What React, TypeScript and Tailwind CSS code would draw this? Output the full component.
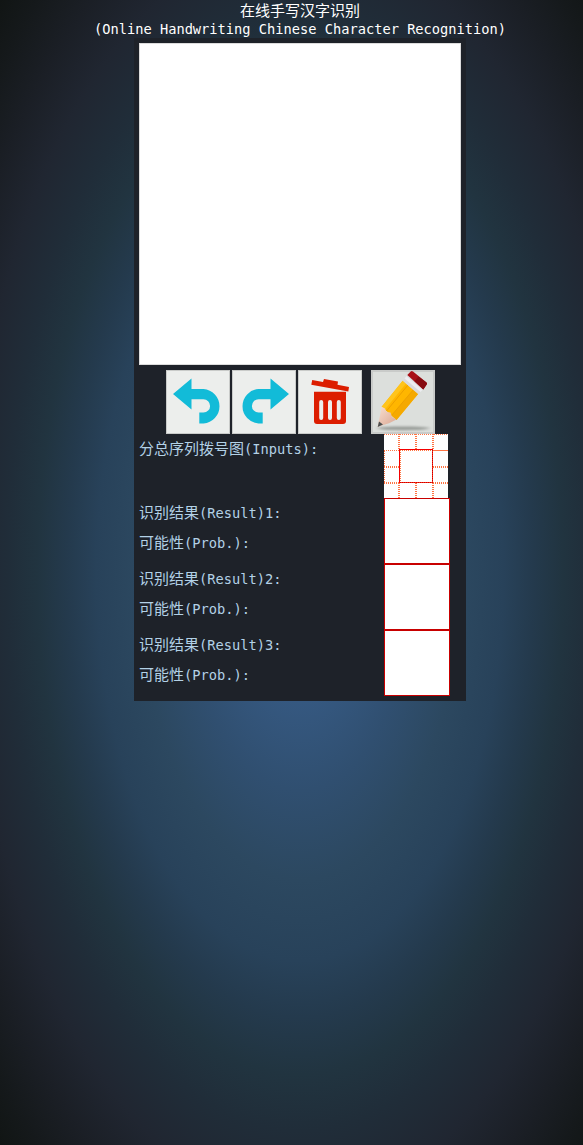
import React from "react";

const MONO = "font-['DejaVu_Sans_Mono',monospace] text-[13.7px]";

function Label({ zh, en }: { zh: string; en: string }) {
  return (
    <div className="flex h-[30px] items-baseline whitespace-nowrap leading-[28px]">
      <span className="font-['Noto_Sans_CJK_SC',sans-serif] text-[15px]">{zh}</span>
      <span className={MONO}>{en}</span>
    </div>
  );
}

function Tool({ children, active = false, label }: { children: React.ReactNode; active?: boolean; label: string }) {
  return (
    <button
      aria-label={label}
      className={`block size-16 shrink-0 ${active ? "ml-[7px] border-2 border-[#c9cbc9] bg-[#dcdfdc]" : "border border-[#c9cbc9] bg-[#eceeec]"}`}
    >
      <svg viewBox={active ? "2 2 60 60" : "1 1 62 62"} className="block size-full overflow-visible">{children}</svg>
    </button>
  );
}

const undoPath = "M7 24 25.500 8.500V19H37.500A17.300 17.300 0 0 1 37.500 53.500H33.300V42.500H37.500A6.500 6.500 0 0 0 37.500 29.300H25.500V39.500Z";

function Result({ index }: { index: number }) {
  return (
    <div className="flex h-[66px] justify-between">
      <div className="flex flex-col">
        <Label zh="识别结果" en={`(Result)${index}:`} />
        <Label zh="可能性" en="(Prob.):" />
      </div>
      <div className="size-[66px] border border-[#c80000] bg-white" />
    </div>
  );
}

export default function App() {
  return (
    <div className="h-[1145px] w-[583px] overflow-hidden bg-[radial-gradient(ellipse_424px_810px_at_300px_572px,#3b6295_0%,#355880_16%,#304f70_27%,#2c4860_38%,#28425a_48%,#243a4d_55%,#213440_62%,#202d39_69%,#202631_78%,#1b1f26_86%,#15191b_94%,#111514_100%)]">
      <div className="flex w-[600px] flex-col items-center">
        <header className="flex h-[38px] flex-col items-center text-white">
          <h1 className="h-5 font-['Noto_Sans_CJK_SC',sans-serif] text-[15px] leading-5">在线手写汉字识别</h1>
          <p className={`h-[18px] whitespace-nowrap leading-[18px] ${MONO}`}>
            (Online Handwriting Chinese Character Recognition)
          </p>
        </header>
        <main className="h-[663px] w-[332px] bg-[#1e2229] pl-[5px] pr-4 pt-[5px] text-[#b3d1e6]">
          <div className="h-[322px] w-[322px] border border-[#dcdcdc] bg-white" />
          <div className="ml-[27px] mt-[5px] flex gap-0.5">
            <Tool label="Undo">
              <path d={undoPath} fill="#12bbd8" />
            </Tool>
            <Tool label="Redo">
              <path d={undoPath} fill="#12bbd8" transform="translate(64 0) scale(-1 1)" />
            </Tool>
            <Tool label="Clear">
              <g fill="#dc1d00">
                <path d="M14.200 10 25 12 26 9 40 11.500 39.500 14.700 51 17 50.300 21.600 13.300 14.800Z" />
                <path d="M16 21.800H48V51Q48 54 45 54H19Q16 54 16 51Z" />
              </g>
              <path d="M23.200 32V48M32 32V48M40.800 32V48" stroke="#eceeec" strokeWidth="4" strokeLinecap="round" />
            </Tool>
            <Tool label="Pencil" active>
              <defs>
                <filter id="shadow" x="-20%" y="-200%" width="140%" height="500%"><feGaussianBlur stdDeviation="2 .8" /></filter>
                <linearGradient id="wood" x1="0" x2="1" y1="0" y2="1">
                  <stop stopColor="#f8dfd0" /><stop offset="1" stopColor="#d9a591" />
                </linearGradient>
              </defs>
              <ellipse cx="32.300" cy="58.300" rx="26" ry="1.900" fill="#9a9e9a" filter="url(#shadow)" />
              <path d="M10.700 36.700 31.700 10.700 47.300 23.800 25.500 50Z" fill="#ffb600" />
              <path d="M10.700 36.700 31.700 10.700 35 13.500 14 39.500Z" fill="#ffc41c" />
              <path d="M20.500 45.500 42.500 19.800 47.300 23.800 25.500 50Z" fill="#f5a900" />
              <path d="m15.500 41 21.500-26M20.500 45.500l22-26" stroke="#eda000" />
              <path d="M10.700 36.700 14 38.500 15.500 42 19.500 42.500 21 47 25.500 49.500 18 53.300 6.700 56.700Z" fill="url(#wood)" />
              <path d="M8 51.500 12 54.500 6.700 57Z" fill="#4d5050" />
              <path d="M31.700 10.700 36.300 5 52.300 19.300 47.300 24.200Z" fill="#d9dadd" />
              <path d="M33.500 8.500 35.500 6 51.500 20 49.500 22Z" fill="#ededf0" />
              <path d="M36.300 5 39.700 1.500Q40.700.5 42 1.500L55.500 12.500Q56.500 13.500 55.700 14.500L52.300 19.500Z" fill="#a90f16" />
              <path d="M43.500 11.300 47.500 6.500 55.500 12.500Q56.500 13.500 55.700 14.500L52.300 19.500Z" fill="#870b10" />
            </Tool>
          </div>
          <div className="flex h-16 justify-between">
            <Label zh="分总序列拨号图" en="(Inputs):" />
            <svg viewBox="0 0 64 64" className="mr-0.5 size-16 bg-white" shapeRendering="crispEdges" fill="none">
              <g stroke="#ff7443" strokeDasharray="1 1">
                <path d="M0 .5H64M0 16.500H15M49 32.500H64M49 33.500H64M0 32.500H15M0 33.500H15M0 48.500H15M0 49.500H15M49 48.500H64M49 49.500H64M.5 17V49" />
                <path d="M14.500 0V15M15.500 0V15M31.500 0V15M32.500 0V15M48.500 0V15M49.500 0V15M14.500 49V64M15.500 49V64M31.500 49V64M32.500 49V64M48.500 49V64M49.500 49V64" />
              </g>
              <path d="M49 16.500H64" stroke="#ff7443" />
              <path d="M48.500 16V49M16 48.500H49" stroke="#ff2a10" />
              <path d="M48.500 16V49M16 48.500H49" stroke="#c80000" strokeDasharray="1 1" />
              <path d="M49 15.500H15.500V49" stroke="#f40000" />
              <path d="M16 16.500H48M16.500 16V48" stroke="#ff7443" strokeDasharray="1 1" />
            </svg>
          </div>
          <div>
            {[1, 2, 3].map((index) => <Result key={index} index={index} />)}
          </div>
        </main>
      </div>
    </div>
  );
}
